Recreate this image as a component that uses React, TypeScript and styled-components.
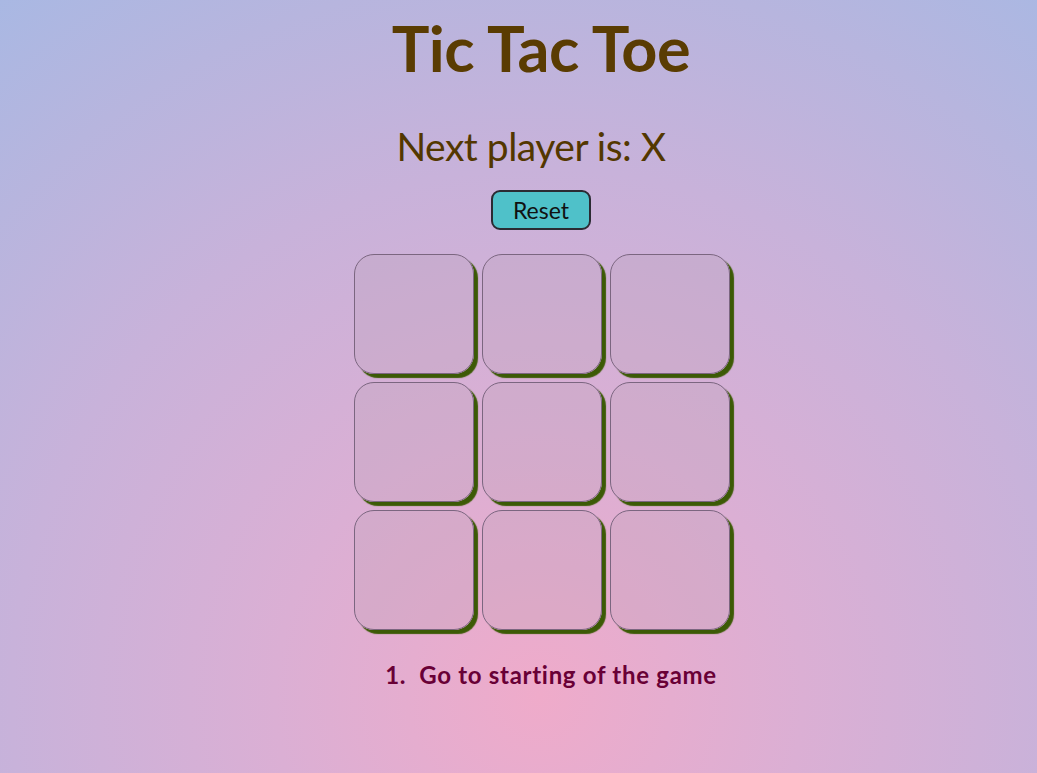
import React, { useState } from "react";
import styled, { createGlobalStyle } from "styled-components";

const GlobalStyle = createGlobalStyle`
  html, body { margin: 0; padding: 0; }
  body {
    font-family: "Lato", "Open Sans", sans-serif;
    min-height: 100vh;
    background: radial-gradient(circle farthest-corner at 52% 90%, #efabca 0%, #dbafd4 30%, #c8b2da 60%, #b7b5de 82%, #a9b8e3 100%);
    background-attachment: fixed;
  }
`;

const Page = styled.div`
  min-height: 100vh;
  display: flex;
  flex-direction: column;
  align-items: center;
  padding-left: 45px;
  box-sizing: border-box;
`;

const Title = styled.h1`
  margin: 12px 0 0;
  font-size: 63px;
  line-height: 72px;
  font-weight: 700;
  color: #5a3c02;
  letter-spacing: -0.5px;
`;

const Status = styled.h2`
  margin: 38px 20px 0 0;
  font-size: 39px;
  line-height: 48px;
  font-weight: 400;
  color: #533700;
  letter-spacing: -0.5px;
`;

const ResetButton = styled.button`
  margin-top: 20px;
  width: 100px;
  height: 40px;
  background: #4fc1c9;
  border: 2px solid #2b2b33;
  border-radius: 9px;
  font-family: "Lato", "Open Sans", sans-serif;
  font-size: 23px;
  color: #111;
  cursor: pointer;
  padding: 0;
`;

const Board = styled.div`
  margin-top: 24px;
  display: grid;
  grid-template-columns: repeat(3, 120px);
  grid-template-rows: repeat(3, 120px);
  gap: 8px;
  margin-left: 2px;
`;

const Cell = styled.button`
  width: 120px;
  height: 120px;
  box-sizing: border-box;
  border: 1px solid #7b6680;
  border-radius: 20px;
  background: rgba(185, 160, 180, 0.25);
  box-shadow: 4px 4px 1px #3c5a06;
  font-family: "Lato", sans-serif;
  font-size: 64px;
  font-weight: 700;
  color: #5a3c02;
  cursor: pointer;
  padding: 0;
`;

const Moves = styled.ol`
  margin: 30px 0 0 20px;
  padding: 0;
  list-style-position: inside;
  text-align: center;
  color: #690036;
  font-size: 24px;
  font-weight: 700;
  letter-spacing: 0.7px;
`;

const MoveItem = styled.li`
  line-height: 30px;
  &::marker { content: "1.\\00a0\\00a0"; }
`;

export default function App() {
  const [squares, setSquares] = useState<(string | null)[]>(Array(9).fill(null));
  const [xNext, setXNext] = useState(true);

  const click = (i: number) => {
    if (squares[i]) return;
    const next = squares.slice();
    next[i] = xNext ? "X" : "O";
    setSquares(next);
    setXNext(!xNext);
  };

  return (
    <>
      <GlobalStyle />
      <Page>
        <Title>Tic Tac Toe</Title>
        <Status>Next player is: {xNext ? "X" : "O"}</Status>
        <ResetButton
          onClick={() => {
            setSquares(Array(9).fill(null));
            setXNext(true);
          }}
        >
          Reset
        </ResetButton>
        <Board>
          {squares.map((s, i) => (
            <Cell key={i} onClick={() => click(i)}>
              {s}
            </Cell>
          ))}
        </Board>
        <Moves>
          <MoveItem>Go to starting of the game</MoveItem>
        </Moves>
      </Page>
    </>
  );
}
